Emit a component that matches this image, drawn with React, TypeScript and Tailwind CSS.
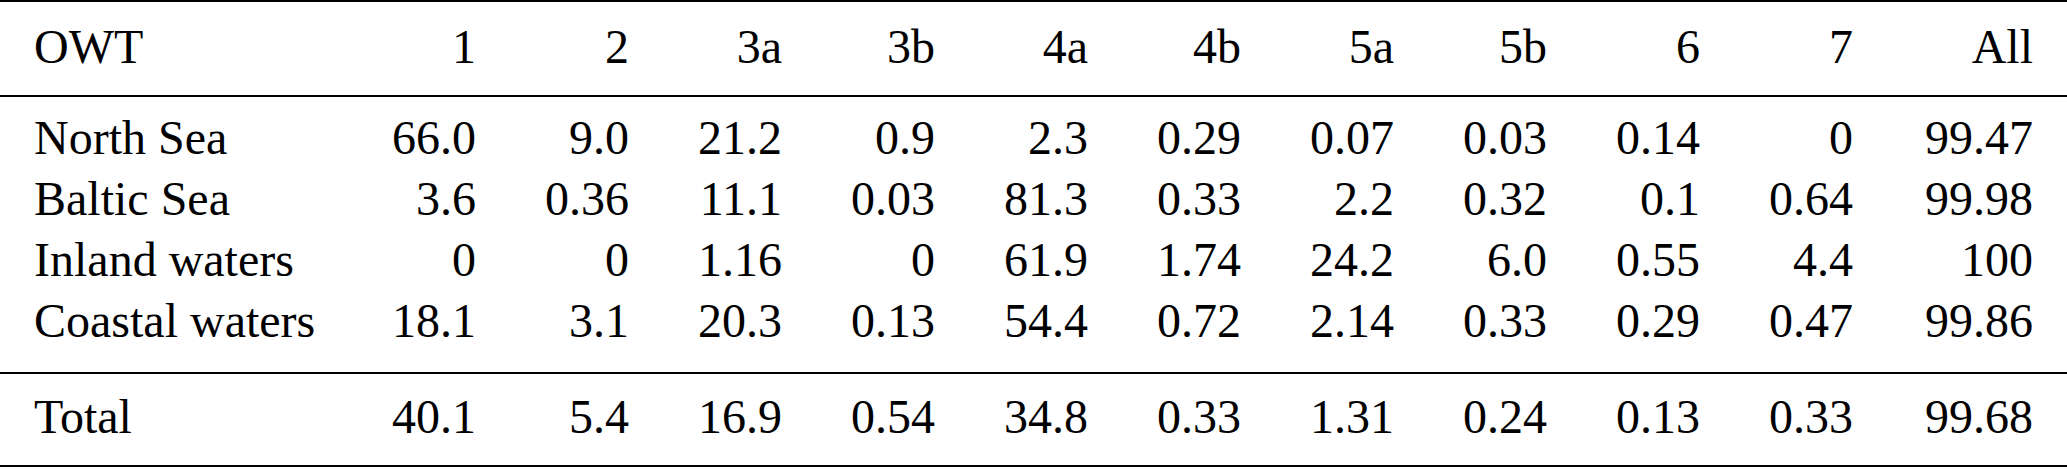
import React from "react";

const header = ["OWT", "1", "2", "3a", "3b", "4a", "4b", "5a", "5b", "6", "7", "All"];
const body: string[][] = [
  ["North Sea", "66.0", "9.0", "21.2", "0.9", "2.3", "0.29", "0.07", "0.03", "0.14", "0", "99.47"],
  ["Baltic Sea", "3.6", "0.36", "11.1", "0.03", "81.3", "0.33", "2.2", "0.32", "0.1", "0.64", "99.98"],
  ["Inland waters", "0", "0", "1.16", "0", "61.9", "1.74", "24.2", "6.0", "0.55", "4.4", "100"],
  ["Coastal waters", "18.1", "3.1", "20.3", "0.13", "54.4", "0.72", "2.14", "0.33", "0.29", "0.47", "99.86"],
];
const total = ["Total", "40.1", "5.4", "16.9", "0.54", "34.8", "0.33", "1.31", "0.24", "0.13", "0.33", "99.68"];

function Row({ cells }: { cells: string[] }) {
  return (
    <div className="grid grid-cols-[357px_repeat(10,153px)_180px] h-[61px] leading-[61px]">
      {cells.map((c, i) => (
        <div
          key={i}
          className={
            i === 0
              ? "pl-[34px] text-left whitespace-nowrap"
              : "pr-[34px] text-right whitespace-nowrap"
          }
        >
          {c}
        </div>
      ))}
    </div>
  );
}

export default function App() {
  return (
    <div className="w-[2067px] h-[469px] bg-white text-black text-[48px] [font-family:'Liberation_Serif','Times_New_Roman',serif]">
      <div className="border-t-2 border-b-2 border-black pt-[14px] pb-[18px]">
        <Row cells={header} />
      </div>
      <div className="pt-[10px] pb-[21px]">
        {body.map((r, i) => (
          <Row key={i} cells={r} />
        ))}
      </div>
      <div className="border-t-2 border-b-2 border-black pt-[12px] pb-[18px]">
        <Row cells={total} />
      </div>
    </div>
  );
}
